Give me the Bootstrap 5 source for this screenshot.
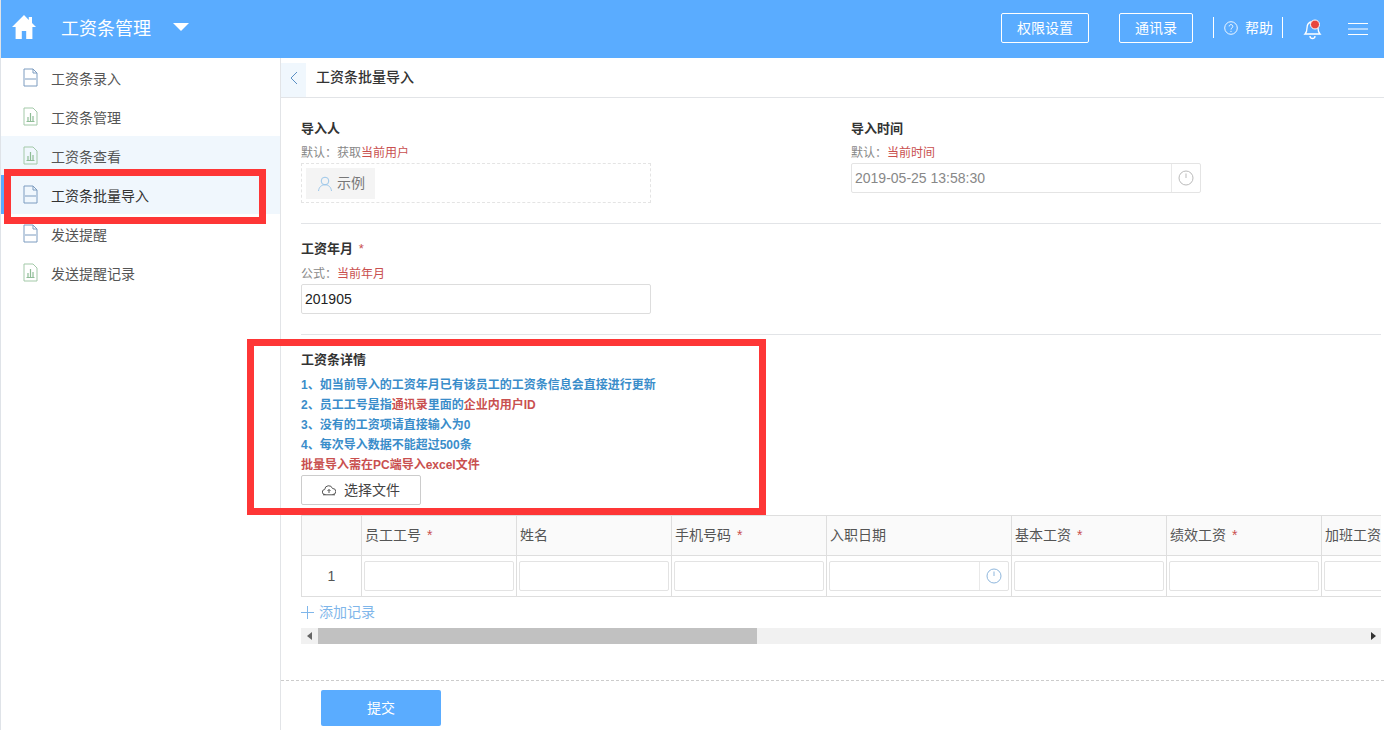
<!DOCTYPE html>
<html lang="zh">
<head>
<meta charset="utf-8">
<title>工资条批量导入</title>
<link rel="stylesheet" href="https://cdn.jsdelivr.net/npm/bootstrap@5.3.0/dist/css/bootstrap.min.css">
<style>
html,body{height:730px;overflow:hidden}
body{font-family:"Liberation Sans","Noto Sans CJK SC",sans-serif;font-size:13px;color:#333;background:#fff;position:relative;border-left:1px solid #dfe3e8}
.top-bar{height:58px;background:#5aacff;color:#fff}
.home-ico{margin-left:10px;width:26px;height:26px;margin-top:-4px}
.app-title{font-size:18px;margin-left:24px;line-height:56px}
.caret-ico{margin-left:22px;width:16px;height:8px;margin-top:-4px}
.top-tools{margin-top:-3px}
.outline-act{height:30px;border:1px solid #fff;border-radius:2px;color:#fff;font-size:14px;background:transparent;padding:0 15px;line-height:28px}
.act-second{margin-left:30px}
.bar-sep{width:1px;height:21px;background:#fff}
.sep-a{margin-left:20px}
.sep-b{margin-left:9px}
.help-ico{margin-left:10px}
.help-txt{font-size:14px;margin-left:7px;margin-top:2px}
.bell-ico{margin-left:20px;margin-top:2px}
.menu-ico{margin-left:25px;margin-right:16px;margin-top:2px}
.side-col{width:280px;flex:none;border-right:1px solid #e2e4e7;height:672px}
.side-link{height:39px;display:flex;align-items:center;padding-left:21px;color:#555;font-size:14px;text-decoration:none;position:relative}
.side-link svg{width:17px;height:19px;margin-right:12px}
.side-link span{margin-top:4px}
.side-on{background:#f0f7fd}
.side-cur{color:#333}
.side-cur::before{content:"";position:absolute;left:0;top:0;bottom:0;width:4px;background:#5aacff}
.main-col{flex:1;min-width:0;height:672px;padding-right:3px}
.crumb-box{height:40px;display:flex;align-items:flex-end;border-bottom:1px solid #e2e4e7;margin-right:-3px}
.back-btn{width:25px;height:34px;background:#f0f7fd;display:flex;align-items:center;justify-content:center;padding-bottom:4px}
.crumb-txt{font-size:14px;color:#333;margin:0 0 0 10px;font-weight:500;align-self:center}
.form-area{padding-left:20px}
.f-row{padding-top:21px}
.f-cell{width:550px;flex:none}
.f-title{font-size:13px;font-weight:700;color:#333;line-height:20px}
.title-b{margin-top:15px}
.title-c{margin-top:15px;margin-bottom:5px}
.f-hint{font-size:12px;color:#888;line-height:18px;margin-top:5px}
.hint-b{margin-top:6px}
.red-t{color:#c9504f}
.star{color:#c9504f;margin-left:2px;font-weight:400}
.dash-box{width:350px;height:40px;border:1px dashed #e4e4e4;padding:4px;margin-top:1px}
.person-tag{width:69px;height:31px;background:#f4f4f4;color:#777;font-size:14px;display:flex;align-items:center;padding-left:11px;gap:4px}
.time-box{width:350px;height:30px;border:1px solid #e4e4e4;border-radius:2px;color:#888;font-size:14px;display:flex;align-items:center;margin-top:1px}
.time-box span{flex:1;padding-left:3px}
.clock-cell{width:29px;height:100%;border-left:1px solid #e9e9e9;display:flex;align-items:center;justify-content:center}
.sep-line{height:1px;background:#e2e4e7;border:0;opacity:1;margin:20px 0 0}
.plain-inp{width:350px;height:30px;border:1px solid #ddd;border-radius:2px;font-size:14px;color:#222;padding:0 3px;display:block;font-family:inherit;margin-top:1px}
.note-line{font-size:12px;font-weight:700;line-height:20px;color:#3a8dca}
.note-red{color:#c9504f}
.pick-btn{width:120px;height:30px;border:1px solid #ccc;border-radius:2px;background:#fff;font-size:14px;color:#444;display:flex;align-items:center;justify-content:center;gap:8px;padding:0}
.tbl-wrap{overflow:hidden;width:1080px;margin-top:10px}
.sheet{table-layout:fixed;border-collapse:collapse;width:1140px;margin:0}
.sheet th,.sheet td{border:1px solid #dedede;padding:0;font-weight:400}
.sheet th{height:40px;background:#fafafa;color:#555;font-size:14px;padding-left:3px;text-align:left}
.sheet td{height:41px;padding:0 2px;background:#fff}
.sheet td.idx{text-align:center;font-size:14px;color:#555;padding:0}
.c-idx{width:60px}
.c-std{width:155px}
.c-date{width:185px}
.cell-inp{display:block;width:150px;height:30px;border:1px solid #e3e3e3;border-radius:2px}
.cell-date{width:180px;height:30px;border:1px solid #e3e3e3;border-radius:2px;display:flex;justify-content:flex-end;align-items:center}
.add-row{color:#7fb6ea;font-size:14px;line-height:20px;display:flex;align-items:center;gap:5px;margin-top:5px}
.h-track{height:16px;background:#f1f1f1;width:1080px;display:flex;align-items:center;margin-top:6px}
.h-arrow{width:16px;display:flex;justify-content:center}
.h-thumb{width:439px;height:16px;background:#c1c1c1;margin-left:1px}
.foot-area{border-top:1px dashed #ccc;margin-top:36px;padding:9px 0 0 40px;margin-right:-3px}
.send-btn{width:120px;height:36px;background:#5aacff;border:0;border-radius:2px;color:#fff;font-size:14px}
.anno{position:absolute;border:7px solid #fe3636;pointer-events:none}
.anno-a{left:3px;top:169px;width:262px;height:55px}
.anno-b{left:246px;top:339px;width:519px;height:176px}
</style>
</head>
<body>
<header class="top-bar d-flex align-items-center">
  <svg class="home-ico" viewBox="0 0 26 26"><path fill="#fff" d="M13 1 1 13h3.600v12h6.200v-8h4.400v8h6.200V13H25l-4-4V3h-3.200v3z"/></svg>
  <div class="app-title">工资条管理</div>
  <svg class="caret-ico" viewBox="0 0 16 8"><path fill="#fff" d="M0 0h16L8 8z"/></svg>
  <div class="ms-auto d-flex align-items-center top-tools">
    <div class="outline-act">权限设置</div>
    <div class="outline-act act-second">通讯录</div>
    <div class="bar-sep sep-a"></div>
    <svg class="help-ico" width="14" height="14" viewBox="0 0 14 14"><circle cx="7" cy="7" r="6.300" fill="none" stroke="#fff" stroke-width=".9"/><path d="M5.200 5.400a1.800 1.800 0 1 1 2.800 1.500c-.7.5-1 .8-1 1.600" fill="none" stroke="#fff" stroke-width=".9"/><circle cx="7" cy="10.300" r=".6" fill="#fff"/></svg>
    <div class="help-txt">帮助</div>
    <div class="bar-sep sep-b"></div>
    <svg class="bell-ico" width="20" height="22" viewBox="0 0 20 22"><path d="M2 16c1.500-1.500 2-3 2-6 0-3.500 2-6 5.500-6.500 3 0 5.500 2.500 5.500 6.500 0 3 .5 4.500 2 6z" fill="none" stroke="#fff" stroke-width="1.300"/><path d="M7 18a2.500 2.500 0 0 0 5 0" fill="none" stroke="#fff" stroke-width="1.300"/><circle cx="12" cy="6.500" r="4.500" fill="#e8473f" stroke="#fff" stroke-width="1"/></svg>
    <svg class="menu-ico" width="20" height="12" viewBox="0 0 20 12"><path d="M0 .5h20M0 6h20M0 11.500h20" stroke="#fff" stroke-width="1"/></svg>
  </div>
</header>
<div class="d-flex">
  <nav class="side-col">
    <a class="side-link" href="#"><svg viewBox="0 0 17 19"><path d="M2 1h9l4 4v13H2zM3 11h11" fill="none" stroke="#7d9cc0"/><path d="M11 1v4h4" fill="none" stroke="#7d9cc0"/></svg><span>工资条录入</span></a>
    <a class="side-link" href="#"><svg viewBox="0 0 17 19"><path d="M2 1h9l4 4v13H2z" fill="none" stroke="#a3c9a8"/><path d="M6 14V10M8.500 14V6M11 14V9M4.500 14.500h8" fill="none" stroke="#8fbd97" stroke-width="1.200"/></svg><span>工资条管理</span></a>
    <a class="side-link side-on" href="#"><svg viewBox="0 0 17 19"><path d="M2 1h9l4 4v13H2z" fill="none" stroke="#a3c9a8"/><path d="M6 14V10M8.500 14V6M11 14V9M4.500 14.500h8" fill="none" stroke="#8fbd97" stroke-width="1.200"/></svg><span>工资条查看</span></a>
    <a class="side-link side-on side-cur" href="#"><svg viewBox="0 0 17 19"><path d="M2 1h9l4 4v13H2zM3 11h11" fill="none" stroke="#7d9cc0"/><path d="M11 1v4h4" fill="none" stroke="#7d9cc0"/></svg><span>工资条批量导入</span></a>
    <a class="side-link" href="#"><svg viewBox="0 0 17 19"><path d="M2 1h9l4 4v13H2zM3 11h11" fill="none" stroke="#7d9cc0"/><path d="M11 1v4h4" fill="none" stroke="#7d9cc0"/></svg><span>发送提醒</span></a>
    <a class="side-link" href="#"><svg viewBox="0 0 17 19"><path d="M2 1h9l4 4v13H2z" fill="none" stroke="#a3c9a8"/><path d="M6 14V10M8.500 14V6M11 14V9M4.500 14.500h8" fill="none" stroke="#8fbd97" stroke-width="1.200"/></svg><span>发送提醒记录</span></a>
  </nav>
  <main class="main-col">
    <div class="crumb-box">
      <div class="back-btn"><svg width="8" height="14" viewBox="0 0 8 14"><path d="M7 1 1 7l6 6" fill="none" stroke="#5a8fc4"/></svg></div>
      <h1 class="crumb-txt">工资条批量导入</h1>
    </div>
    <div class="form-area">
      <div class="d-flex f-row">
        <div class="f-cell">
          <div class="f-title">导入人</div>
          <div class="f-hint">默认：获取<span class="red-t">当前用户</span></div>
          <div class="dash-box">
            <div class="person-tag"><svg width="16" height="16" viewBox="0 0 16 16"><circle cx="8" cy="5" r="3.800" fill="none" stroke="#9cc7ea"/><path d="M1.500 15c.5-4 3-6.200 6.500-6.200s6 2.200 6.500 6.200" fill="none" stroke="#9cc7ea"/></svg><span>示例</span></div>
          </div>
        </div>
        <div class="f-cell">
          <div class="f-title">导入时间</div>
          <div class="f-hint">默认：<span class="red-t">当前时间</span></div>
          <div class="time-box"><span>2019-05-25 13:58:30</span><div class="clock-cell"><svg width="16" height="16" viewBox="0 0 16 16"><circle cx="8" cy="8" r="7" fill="none" stroke="#bbb"/><path d="M8 3.500V8" stroke="#bbb"/></svg></div></div>
        </div>
      </div>
      <hr class="sep-line">
      <div class="f-title title-b">工资年月 <span class="star">*</span></div>
      <div class="f-hint hint-b">公式：<span class="red-t">当前年月</span></div>
      <input class="plain-inp" value="201905">
      <hr class="sep-line">
      <div class="f-title title-c">工资条详情</div>
      <div class="note-line">1、如当前导入的工资年月已有该员工的工资条信息会直接进行更新</div>
      <div class="note-line">2、员工工号是指<span class="note-red">通讯录</span>里面的<span class="note-red">企业内用户ID</span></div>
      <div class="note-line">3、没有的工资项请直接输入为0</div>
      <div class="note-line">4、每次导入数据不能超过500条</div>
      <div class="note-line note-red">批量导入需在PC端导入excel文件</div>
      <button class="pick-btn" type="button"><svg width="14" height="11" viewBox="0 0 14 11"><path d="M3.500 9.500H3a2.500 2.500 0 0 1-.3-5A4 4 0 0 1 10.500 3.500 3 3 0 0 1 11 9.500h-.5M1 9.800h12M7 8V4.500M5.500 6 7 4.500 8.500 6" fill="none" stroke="#555"/></svg><span>选择文件</span></button>
      <div class="tbl-wrap">
        <table class="sheet">
          <colgroup><col class="c-idx"><col class="c-std"><col class="c-std"><col class="c-std"><col class="c-date"><col class="c-std"><col class="c-std"><col class="c-std"></colgroup>
          <thead><tr><th></th><th>员工工号 <span class="star">*</span></th><th>姓名</th><th>手机号码 <span class="star">*</span></th><th>入职日期</th><th>基本工资 <span class="star">*</span></th><th>绩效工资 <span class="star">*</span></th><th>加班工资</th></tr></thead>
          <tbody><tr>
            <td class="idx">1</td>
            <td><div class="cell-inp"></div></td>
            <td><div class="cell-inp"></div></td>
            <td><div class="cell-inp"></div></td>
            <td><div class="cell-date"><div class="clock-cell"><svg width="16" height="16" viewBox="0 0 16 16"><circle cx="8" cy="8" r="7" fill="none" stroke="#8fb7dd"/><path d="M8 3.500V8" stroke="#8fb7dd"/></svg></div></div></td>
            <td><div class="cell-inp"></div></td>
            <td><div class="cell-inp"></div></td>
            <td><div class="cell-inp"></div></td>
          </tr></tbody>
        </table>
      </div>
      <div class="add-row"><svg width="13" height="13" viewBox="0 0 13 13"><path d="M6.500 0v13M0 6.500h13" stroke="#7fb6ea"/></svg><span>添加记录</span></div>
      <div class="h-track">
        <div class="h-arrow"><svg width="5" height="8" viewBox="0 0 5 8"><path d="M5 0v8L0 4z" fill="#666"/></svg></div>
        <div class="h-thumb"></div>
        <div class="h-arrow ms-auto"><svg width="5" height="8" viewBox="0 0 5 8"><path d="M0 0v8l5-4z" fill="#333"/></svg></div>
      </div>
    </div>
    <div class="foot-area"><button class="send-btn" type="button">提交</button></div>
  </main>
</div>
<div class="anno anno-a"></div>
<div class="anno anno-b"></div>
<script src="https://cdn.jsdelivr.net/npm/bootstrap@5.3.0/dist/js/bootstrap.bundle.min.js"></script>
</body>
</html>
